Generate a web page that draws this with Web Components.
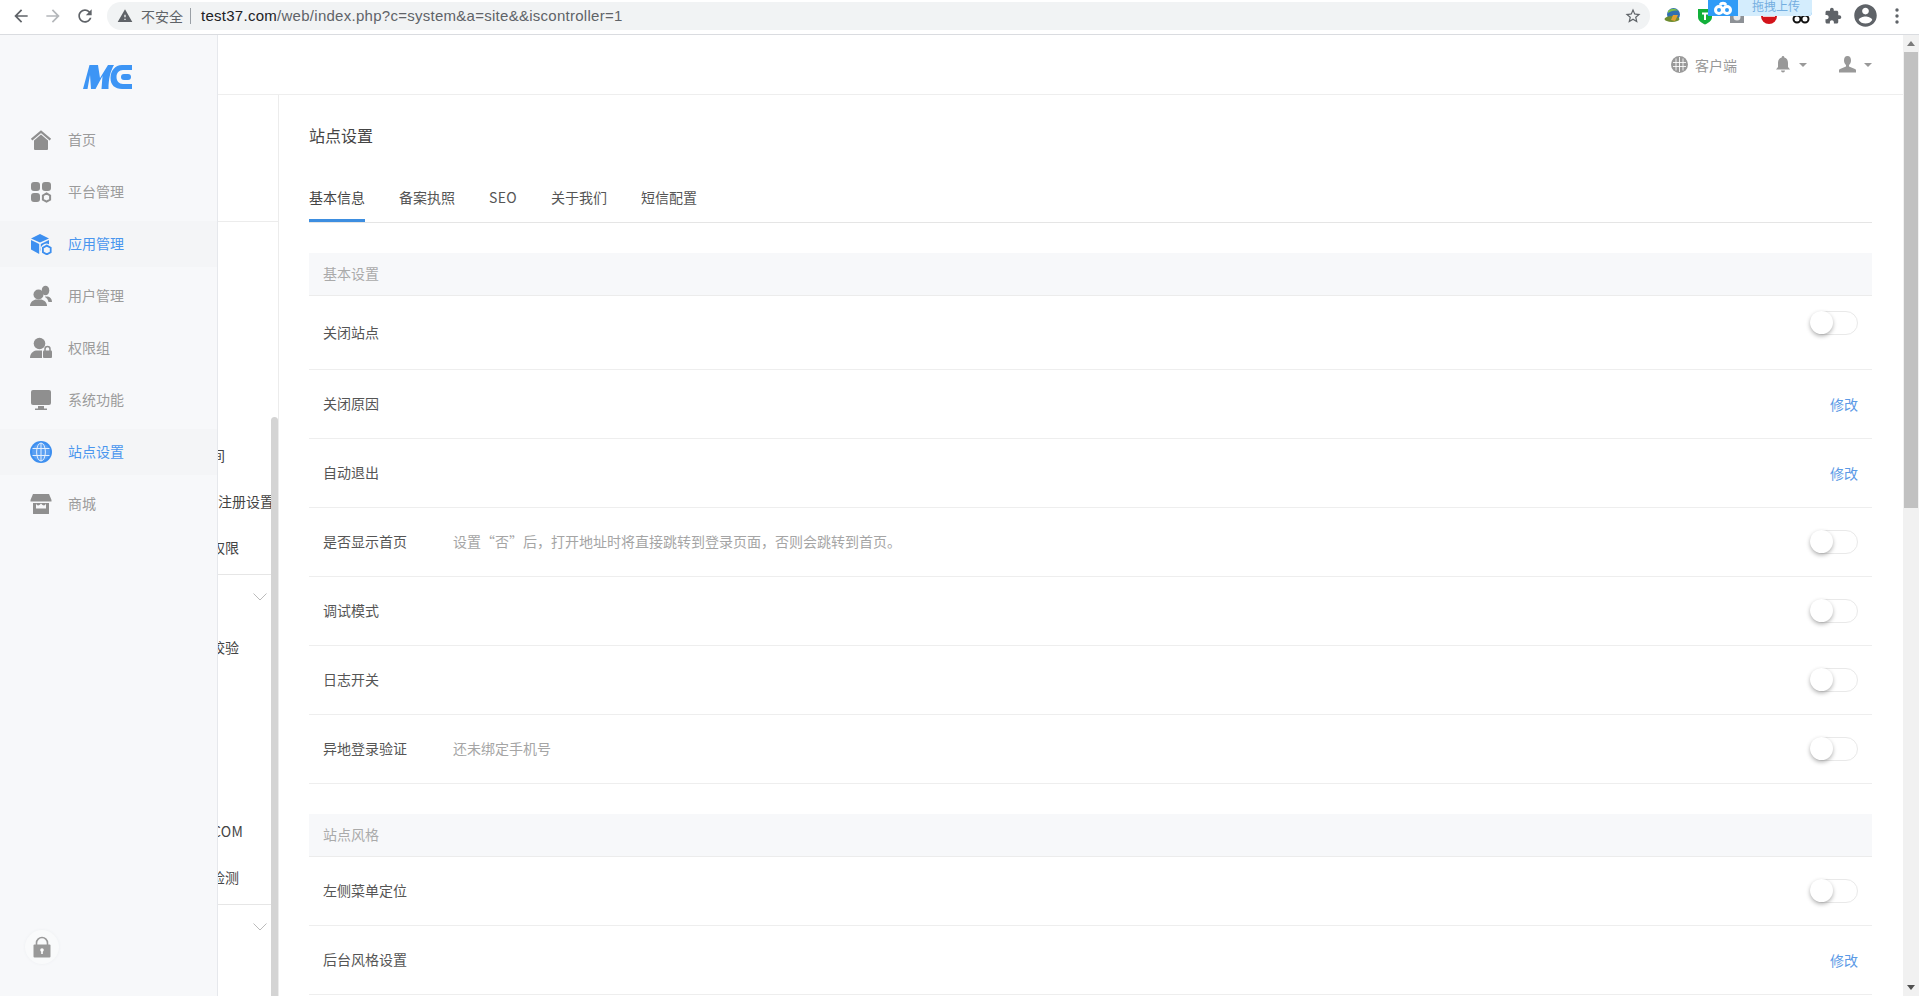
<!DOCTYPE html>
<html lang="zh-CN"><head><meta charset="utf-8"><title>站点设置</title>
<style>
html,body{margin:0;padding:0;height:996px;overflow:hidden;background:#fff;font-family:"Noto Sans CJK SC","Noto Sans",sans-serif;font-size:14px;color:#444}
app-shell{height:996px}
</style></head><body>
<app-shell>
  <browser-bar slot="bar"></browser-bar>
  <side-nav slot="nav"></side-nav>
  <top-header slot="header"></top-header>
  <sub-rail slot="rail"></sub-rail>
  <site-settings slot="main"></site-settings>
  <page-scrollbar slot="scroll"></page-scrollbar>
</app-shell>
<script>
function define(name, html, setup){
  customElements.define(name, class extends HTMLElement{
    constructor(){super();this.attachShadow({mode:'open'});}
    connectedCallback(){
      const h = typeof html==='function'?html(this):html;
      this.shadowRoot.innerHTML=h;
      if(setup)setup(this);
    }
  });
}
const M={
 back:'M20 11H7.83l5.59-5.59L12 4l-8 8 8 8 1.41-1.41L7.83 13H20v-2z',
 fwd:'M12 4l-1.41 1.41L16.17 11H4v2h12.17l-5.58 5.59L12 20l8-8z',
 reload:'M17.65 6.35C16.2 4.9 14.21 4 12 4c-4.42 0-7.99 3.58-7.99 8s3.57 8 7.99 8c3.73 0 6.84-2.55 7.73-6h-2.08c-.82 2.33-3.04 4-5.65 4-3.31 0-6-2.69-6-6s2.69-6 6-6c1.66 0 3.14.69 4.22 1.78L13 11h7V4l-2.35 2.35z',
 warn:'M1 21h22L12 2 1 21zm12-3h-2v-2h2v2zm0-4h-2v-4h2v4z',
 star:'M22 9.24l-7.19-.62L12 2 9.19 8.63 2 9.24l5.46 4.73L5.82 21 12 17.27 18.18 21l-1.63-7.03L22 9.24zM12 15.4l-3.76 2.27 1-4.28-3.32-2.88 4.38-.38L12 6.1l1.71 4.04 4.38.38-3.32 2.88 1 4.28L12 15.4z',
 puzzle:'M20.5 11H19V7c0-1.1-.9-2-2-2h-4V3.5C13 2.12 11.88 1 10.5 1S8 2.12 8 3.5V5H4c-1.1 0-1.99.9-1.99 2v3.8H3.5c1.49 0 2.7 1.21 2.7 2.7s-1.21 2.7-2.7 2.7H2V20c0 1.1.9 2 2 2h3.8v-1.5c0-1.49 1.21-2.7 2.7-2.7 1.49 0 2.7 1.21 2.7 2.7V22H17c1.1 0 2-.9 2-2v-4h1.5c1.38 0 2.5-1.12 2.5-2.5S21.88 11 20.5 11z',
 acct:'M12 2C6.48 2 2 6.48 2 12s4.48 10 10 10 10-4.48 10-10S17.52 2 12 2zm0 3c1.66 0 3 1.34 3 3s-1.34 3-3 3-3-1.34-3-3 1.34-3 3-3zm0 14.2c-2.5 0-4.71-1.28-6-3.22.03-1.99 4-3.08 6-3.08 1.99 0 5.97 1.09 6 3.08-1.29 1.94-3.5 3.22-6 3.22z'
};
const ic=(d,s,c,extra='')=>`<svg width="${s}" height="${s}" viewBox="0 0 24 24" fill="${c}" style="display:block;${extra}"><path d="${d}"/></svg>`;
const I={
 home:c=>`<path d="M4 11.5 11 5.6l7 5.9V20a1 1 0 0 1-1 1H5a1 1 0 0 1-1-1z" fill="${c}"/><path d="M1.6 10.6 11 2.6l9.4 8" fill="none" stroke="${c}" stroke-width="2.2"/>`,
 apps:c=>`<rect x="1" y="1" width="9" height="9" rx="3" fill="${c}"/><rect x="12" y="1" width="9" height="9" rx="3" fill="${c}"/><rect x="1" y="12" width="9" height="9" rx="3" fill="${c}"/><path d="M16.5 12.4l3.6 2.1v4.1l-3.6 2.1-3.6-2.1v-4.1z" fill="none" stroke="${c}" stroke-width="2"/>`,
 box:c=>`<path d="M10 1 19 5.4 10 9.6 1 5.4z" fill="${c}"/><path d="M1 7v9.4L9.2 21v-10z" fill="${c}"/><path d="M10.8 11 19 7v4.2a6 6 0 0 0-8.2 7.4z" fill="${c}"/><path d="M16.8 12.6l3.9 2.2v4.4l-3.9 2.2-3.9-2.2v-4.4z" fill="#f4f5f7" stroke="${c}" stroke-width="1.8"/><circle cx="16.8" cy="17" r="1.4" fill="#f4f5f7"/>`,
 users:c=>`<circle cx="8.500" cy="9.500" r="5" fill="${c}"/><path d="M0 21c0-3.500 2.500-5.500 5.500-6.500h6c3 1 5.500 3 5.500 6.500z" fill="${c}"/><ellipse cx="15.500" cy="5.500" rx="3.800" ry="4.800" fill="${c}"/><path d="M15 11.500h3c2.500.7 4 2.500 4 5.500h-3.500c-.5-2.300-1.500-4-3.500-5z" fill="${c}"/>`,
 plock:c=>`<circle cx="9.500" cy="6.500" r="5.800" fill="${c}"/><path d="M0 21c0-4.500 3-6.800 6-7.500h6v7.500z" fill="${c}"/><rect x="13" y="13.500" width="9" height="7.500" rx="1" fill="${c}"/><path d="M15 14v-2a2.500 2.500 0 0 1 5 0v2" fill="none" stroke="${c}" stroke-width="1.500"/>`,
 monitor:c=>`<rect x="1" y="1" width="20" height="15" rx="2" fill="${c}"/><path d="M8 17h6v2.500h3V21H5v-1.500h3z" fill="${c}"/>`,
 globe:c=>`<circle cx="11" cy="11" r="11" fill="${c}"/><circle cx="11" cy="11" r="9" fill="#5a9ff2"/><g fill="none" stroke="#e4effd" stroke-width="1"><ellipse cx="11" cy="11" rx="4.400" ry="9"/><path d="M11 2v18M2.500 7.500h17M2.500 14.500h17"/></g>`,
 shop:c=>`<path d="M3 1h16l2.500 6v1.500H.5V7z" fill="${c}"/><path d="M3 10h16v10.500a.5.5 0 0 1-.5.5h-15a.5.5 0 0 1-.5-.5z" fill="${c}"/><path d="M6 10.500c1 2.500 3 2.500 5 0 2 2.500 4 2.500 5 0v5H6z" fill="#f7f8fa"/>`
};
const svg22=(b,c)=>`<svg width="22" height="22" viewBox="0 0 22 22" style="display:block;flex:none">${I[b](c)}</svg>`;

define('app-shell',`<style>
:host{display:grid;grid-template-columns:218px 60px 1fr 16px;grid-template-rows:35px 60px 1fr;width:1919px;overflow:hidden}
::slotted([slot=bar]){grid-column:1/-1}
::slotted([slot=nav]){grid-column:1;grid-row:2/4}
::slotted([slot=header]){grid-column:2/4;grid-row:2}
::slotted([slot=rail]){grid-column:2;grid-row:3}
::slotted([slot=main]){grid-column:3;grid-row:3}
::slotted([slot=scroll]){grid-column:4;grid-row:2/4}
</style><slot name="bar"></slot><slot name="nav"></slot><slot name="header"></slot><slot name="rail"></slot><slot name="main"></slot><slot name="scroll"></slot>`);

define('browser-bar',`<style>
:host{display:flex;align-items:center;height:34px;border-bottom:1px solid #dadce0;background:#fff;position:relative;font-family:"Liberation Sans","Noto Sans CJK SC",sans-serif;padding-left:5px}
.n{width:32px;display:flex;justify-content:center}
.omni{margin-top:-3px;margin-left:6px;width:1543px;flex:none;height:28px;border-radius:14px;background:#f1f3f4;display:flex;align-items:center;padding-left:10px;box-sizing:border-box}
.sec{font:14px "Noto Sans CJK SC",sans-serif;color:#5f6368;margin-left:8px;line-height:28px}
.sep{width:1px;height:16px;background:#9aa0a6;margin:0 10px 0 7px}
.url{font-size:15px;letter-spacing:.27px;color:#5f6368;flex:1;white-space:nowrap}.url b{font-weight:400;color:#202124}
.ext{width:32px;display:flex;justify-content:center;align-items:center;height:34px}
.exts{display:flex;margin-left:7px;margin-top:-3px}
.omni svg.star{margin-right:8px}
.badge{position:absolute;left:1708px;top:0;width:104px;height:16px;display:flex;font:12px/12px "Noto Sans CJK SC",sans-serif;border-radius:0 0 4px 0;overflow:hidden;box-shadow:0 0 0 1px #3d9cf5 inset}
.badge i{width:30px;background:#2f9bf7;display:flex;align-items:center;justify-content:center}
.badge span{flex:1;background:#d4edfd;color:#74aee0;padding-left:14px}
</style>
<div class="n">${ic(M.back,20,'#5f6368','margin-top:-3px')}</div>
<div class="n">${ic(M.fwd,20,'#b4b7ba','margin-top:-3px')}</div>
<div class="n">${ic(M.reload,20,'#5f6368','margin-top:-3px')}</div>
<div class="omni">${ic(M.warn,16,'#5f6368')}<span class="sec">不安全</span><span class="sep"></span>
<span class="url"><b>test37.com</b>/web/index.php?c=system&amp;a=site&amp;&amp;iscontroller=1</span>
<svg class="star" width="18" height="18" viewBox="0 0 24 24" fill="#5f6368"><path d="${M.star}"/></svg></div>
<div class="exts">
<div class="ext"><svg width="18" height="18" viewBox="0 0 18 18"><circle cx="9.500" cy="7.500" r="6.500" fill="#2f6fb0"/><path d="M4 4c3-3 8-3 10 0-3-1-7 0-10 2z" fill="#7cc04a"/><ellipse cx="8" cy="12" rx="7.500" ry="3" fill="#6e8c2f"/><path d="M9 8h5l-3 6-4-1z" fill="#e0a030"/></svg></div>
<div class="ext"><svg width="16" height="18" viewBox="0 0 16 18"><path d="M1 2h14v8c0 4-4 6-7 7.500C5 16 1 14 1 10z" fill="#12b03a"/><path d="M5 6.500h6M8 6.500V13" stroke="#fff" stroke-width="2" fill="none"/></svg></div>
<div class="ext"><svg width="16" height="18" viewBox="0 0 16 18"><rect x="1" y="3" width="14" height="13" fill="#8d9196"/><circle cx="8" cy="10" r="3.500" fill="#e8e8e8"/></svg></div>
<div class="ext"><svg width="18" height="18" viewBox="0 0 18 18"><circle cx="9" cy="9" r="8" fill="#d3131a"/><rect x="3" y="6" width="12" height="4" fill="#f2c9c9"/></svg></div>
<div class="ext"><svg width="18" height="18" viewBox="0 0 18 18"><circle cx="5" cy="12" r="3.500" fill="#fff" stroke="#111" stroke-width="2"/><circle cx="13" cy="12" r="3.500" fill="#fff" stroke="#111" stroke-width="2"/></svg></div>
<div class="ext">${ic(M.puzzle,18,'#5f6368')}</div>
<div class="ext">${ic(M.acct,27,'#5f6368')}</div>
<div class="ext"><svg width="4" height="16" viewBox="0 0 4 16" fill="#5f6368"><circle cx="2" cy="2" r="1.700"/><circle cx="2" cy="8" r="1.700"/><circle cx="2" cy="14" r="1.700"/></svg></div>
</div>
<div class="badge"><i><svg width="20" height="14" viewBox="0 0 20 14" fill="none" stroke="#fff" stroke-width="3"><circle cx="6" cy="9" r="3.500"/><circle cx="14" cy="9" r="3.500"/><path d="M7 4a3.500 3.500 0 0 1 6 0"/></svg></i><span>拖拽上传</span></div>`);

define('nav-item',el=>{const a=el.hasAttribute('active');const c=a?'#3d8ff0':'#8f8f8f';return `<style>
:host{display:flex;align-items:center;height:46px;margin:3px 0;padding-left:30px;box-sizing:border-box;color:${a?'#4a96ee':'#9b9b9b'};background:${a?'#f4f5f7':'transparent'};font-size:14px}
span{margin-left:16px;padding-bottom:2px}
</style>${svg22(el.getAttribute('icon'),c)}<span><slot></slot></span>`});

define('side-nav',`<style>
:host{display:flex;flex-direction:column;background:#f7f8fa;border-right:1px solid #e6e8ec;box-sizing:border-box;height:961px;width:218px}
.logo{height:79px;display:flex;justify-content:center;align-items:flex-start}
.logo svg{margin-top:29px;margin-right:3px}
.foot{margin-top:auto;margin-bottom:32px;margin-left:25px;width:34px;height:34px;border-radius:50%;background:#f9fafb;box-shadow:0 0 3px #eceef1;display:flex;align-items:center;justify-content:center}
</style>
<div class="logo"><svg width="49" height="25" viewBox="0 0 49 25" fill="#3d95f5"><path d="M0 25 6.500 1H15l2 13L25 1h6c-3.500 6-5.500 14-5.500 24h-7l1-13L12.500 25H8L7 11 4.500 25z"/><path d="M49 1H39c-7 0-11.500 6-11.500 13S32 25 39 25h10v-5h-9c-4 0-6.500-3-6.500-7s2.500-7 6.500-7h9z"/><rect x="38" y="10" width="10" height="6" rx="3"/></svg></div>
<nav-item icon="home">首页</nav-item>
<nav-item icon="apps">平台管理</nav-item>
<nav-item icon="box" active>应用管理</nav-item>
<nav-item icon="users">用户管理</nav-item>
<nav-item icon="plock">权限组</nav-item>
<nav-item icon="monitor">系统功能</nav-item>
<nav-item icon="globe" active>站点设置</nav-item>
<nav-item icon="shop">商城</nav-item>
<div class="foot"><svg width="18" height="22" viewBox="0 0 18 22"><path d="M3.500 10V7a5.500 5.500 0 0 1 11 0v3" fill="none" stroke="#999" stroke-width="1.600"/><rect x="0.500" y="8.500" width="17" height="13" rx="1" fill="#999"/><circle cx="9" cy="14" r="1.800" fill="#fff"/><rect x="8.200" y="14" width="1.600" height="4" fill="#fff"/></svg></div>`);

define('top-header',`<style>
:host{display:flex;align-items:center;justify-content:flex-end;height:60px;border-bottom:1px solid #eee;box-sizing:border-box;color:#999;padding-right:31px;font-size:14px;background:#fff}
.g{display:flex;align-items:center}
.c{width:0;height:0;border:4px solid transparent;border-top:4px solid #999;border-bottom:0}
span{margin-left:7px;color:#999}
</style>
<div class="g"><svg width="17" height="17" viewBox="0 0 17 17"><circle cx="8.500" cy="8.500" r="8.500" fill="#999"/><path d="M5 2.500v12M8.500 1v15M12 2.500v12M2 6.500h13M2 10.500h13" stroke="#fff" stroke-width="1" fill="none" opacity=".85"/></svg><span>客户端</span></div>
<div class="g" style="margin-left:39px"><svg width="14" height="17" viewBox="0 0 14 17" fill="#999"><path d="M7 0a1.300 1.300 0 0 1 1.300 1.400C11 2 12 4.500 12 7v4l2 2.500H0L2 11V7c0-2.500 1-5 3.700-5.600A1.300 1.300 0 0 1 7 0z"/><path d="M5 14.500h4a2 2 0 0 1-4 0z"/></svg><i class="c" style="margin-left:9px"></i></div>
<div class="g" style="margin-left:32px"><svg width="17" height="17" viewBox="0 0 17 17" fill="#999"><path d="M8.500 0C6 0 5 2 5 4.500c0 2 1 3.800 2 4.500v1.500L1 13c-.8.400-1 1-1 1.500V16.500h17v-2c0-.5-.2-1.100-1-1.500l-6-2.500V9c1-.7 2-2.500 2-4.500C12 2 11 0 8.500 0z"/></svg><i class="c" style="margin-left:8px"></i></div>`);

define('sub-rail',`<style>
:host{display:block;position:relative;height:901px;overflow:hidden;border-right:1px solid #ececec;box-sizing:border-box;font-size:14px;color:#444;background:#fff;width:61px;white-space:nowrap}
.top{height:127px;border-bottom:1px solid #ececec;box-sizing:border-box}
.gap{height:210px}
.i{height:46px;line-height:46px;overflow:hidden;width:60px}
.i b{font-weight:400;display:inline-block}
.head{height:40px;padding-top:2px;border-top:1px solid #e6e6e6;display:flex;justify-content:flex-end;align-items:center;padding-right:11px}
.bar{position:absolute;left:53px;top:322px;bottom:0;width:7px;background:#d4d4d4;border-radius:4px 4px 0 0}
</style>
<div class="top"></div><div class="gap"></div>
<div class="i"><b style="margin-left:-7px">间</b></div>
<div class="i"><b>注册设置</b></div>
<div class="i"><b style="margin-left:-7px">权限</b></div>
<div style="height:4px"></div>
<div class="head"><svg width="14" height="8" viewBox="0 0 14 8" fill="none" stroke="#bbb"><path d="M.5.5 7 7 13.500.5"/></svg></div>
<div class="i" style="margin-top:7px"><b style="margin-left:-7px">校验</b></div>
<div style="height:138px"></div>
<div class="i"><b style="margin-left:-6px;letter-spacing:.3px">COM</b></div>
<div class="i"><b style="margin-left:-7px">检测</b></div>
<div style="height:4px"></div>
<div class="head"><svg width="14" height="8" viewBox="0 0 14 8" fill="none" stroke="#bbb"><path d="M.5.5 7 7 13.500.5"/></svg></div>
<div class="bar"></div>`);

define('toggle-switch',`<style>
:host{display:block;width:48px;height:24px;position:relative;box-sizing:border-box;border:1px solid #e9e9e9;border-radius:12px;background:#fff;flex:none}
i{position:absolute;left:-1px;top:-1px;width:23px;height:23px;border-radius:50%;background:#fff;box-shadow:0 2px 4px rgba(0,0,0,.3)}
</style><i></i>`);

define('section-head',`<style>
:host{display:flex;align-items:center;height:43px;background:#f7f8fa;border-bottom:1px solid #ececec;box-sizing:border-box;padding-left:14px;color:#aaa;font-size:14px}
div{padding-bottom:2px}
</style><div><slot></slot></div>`);

define('setting-row',el=>`<style>
:host{display:flex;align-items:center;height:${el.getAttribute('h')||69}px;border-bottom:1px solid #eee;box-sizing:border-box;padding:0 14px;font-size:14px;color:#555}
.l{width:130px;flex:none;padding-bottom:2px}
.d{color:#a5a5a5;flex:1;padding-bottom:2px}
::slotted(a){color:#5b9ae6;padding-bottom:1px}
</style><div class="l">${el.getAttribute('label')}</div><div class="d">${el.getAttribute('desc')||''}</div><slot></slot>`);

define('site-settings',`<style>
:host{display:block;height:901px;overflow:hidden;padding:29px 31px 0;box-sizing:border-box;background:#fff;min-width:0}
h1{font-size:16px;font-weight:400;color:#444;margin:0;line-height:22px}
.tabs{display:flex;gap:34px;height:48px;margin-top:29px;border-bottom:1px solid #e5e5e5;box-sizing:border-box;color:#555}
.tabs div{height:47px;line-height:44px;box-sizing:border-box}
.tabs .on{border-bottom:3px solid #3d8ee0;color:#444}
.tabs .seo{letter-spacing:.3px}
section{margin-top:30px}
</style>
<h1>站点设置</h1>
<div class="tabs"><div class="on">基本信息</div><div>备案执照</div><div class="seo">SEO</div><div>关于我们</div><div>短信配置</div></div>
<section><section-head>基本设置</section-head>
<setting-row label="关闭站点" h="74"><toggle-switch style="margin-bottom:19px"></toggle-switch></setting-row>
<setting-row label="关闭原因"><a>修改</a></setting-row>
<setting-row label="自动退出"><a>修改</a></setting-row>
<setting-row label="是否显示首页" desc="设置“否”后，打开地址时将直接跳转到登录页面，否则会跳转到首页。"><toggle-switch></toggle-switch></setting-row>
<setting-row label="调试模式"><toggle-switch></toggle-switch></setting-row>
<setting-row label="日志开关"><toggle-switch></toggle-switch></setting-row>
<setting-row label="异地登录验证" desc="还未绑定手机号"><toggle-switch></toggle-switch></setting-row>
</section>
<section><section-head>站点风格</section-head>
<setting-row label="左侧菜单定位"><toggle-switch></toggle-switch></setting-row>
<setting-row label="后台风格设置"><a>修改</a></setting-row>
</section>`);

define('page-scrollbar',`<style>
:host{display:flex;flex-direction:column;align-items:center;height:961px;background:#f1f1f1;box-sizing:border-box}
.t{height:17px;display:flex;align-items:center;justify-content:center;flex:none;width:100%}
.th{width:14px;height:456px;background:#c1c1c1;flex:none}
.s{flex:1}
</style>
<div class="t"><svg width="8" height="5" viewBox="0 0 8 5"><path d="M4 0l4 5H0z" fill="#7a7a7a"/></svg></div>
<div class="th"></div><div class="s"></div>
<div class="t"><svg width="8" height="5" viewBox="0 0 8 5"><path d="M4 5l4-5H0z" fill="#505050"/></svg></div>`);
</script>
</body></html>
